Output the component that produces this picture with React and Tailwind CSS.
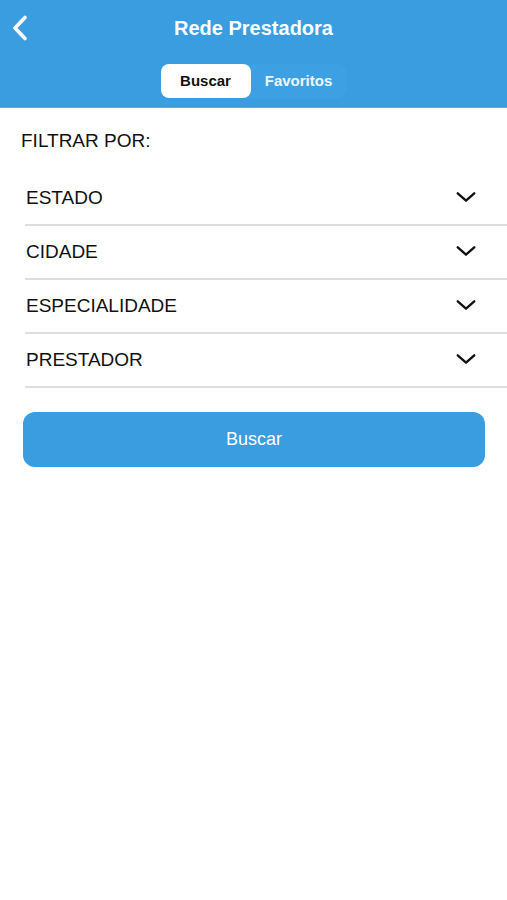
import React from 'react';

const font = { fontFamily: '"Liberation Sans", Arial, sans-serif' };

const Chevron = ({ className }) => (
  <svg viewBox="0 0 24 24" className={className} fill="none" stroke="currentColor" strokeWidth="2.6" strokeLinecap="round" strokeLinejoin="round">
    <path d="M3 8l9 8 9-8" />
  </svg>
);

const BackArrow = () => (
  <svg viewBox="0 0 16 26" className="w-[16px] h-[26px] text-white" fill="none" stroke="currentColor" strokeWidth="3.6" strokeLinecap="round" strokeLinejoin="round">
    <path d="M13 2.5L3 13l10 10.5" />
  </svg>
);

const filters = ['ESTADO', 'CIDADE', 'ESPECIALIDADE', 'PRESTADOR'];

export default function App() {
  return (
    <div className="w-[507px] h-[900px] bg-white" style={font}>
      {/* Header */}
      <div className="bg-[#3a9de0] h-[108px] border-b border-[#5aaee6] flex flex-col">
        <div className="relative h-[56px] flex items-center justify-center">
          <div className="absolute left-[12px] top-[15px]">
            <BackArrow />
          </div>
          <h1 className="text-white text-[20px] font-bold">Rede Prestadora</h1>
        </div>
        <div className="flex justify-center mt-[8px]">
          <div className="flex rounded-[9px] bg-[#3da0e3]">
            <div className="w-[90px] h-[34px] bg-white rounded-[8px] flex items-center justify-center text-[15px] font-bold text-[#111]">
              Buscar
            </div>
            <div className="w-[96px] h-[34px] flex items-center justify-center text-[15px] font-bold text-white/90">
              Favoritos
            </div>
          </div>
        </div>
      </div>

      {/* Filters */}
      <div className="pt-[20px]">
        <p className="pl-[21px] text-[19px] text-[#111] leading-[26px]">FILTRAR POR:</p>
        <div className="mt-[18px] pl-[25px]">
          {filters.map((f) => (
            <div key={f} className="h-[54px] flex items-center justify-between border-b-2 border-[#dedede] pr-[30px]">
              <span className="pl-[1px] text-[19px] text-[#111]">{f}</span>
              <Chevron className="w-[22px] h-[22px] text-[#111] -mt-[3px]" />
            </div>
          ))}
        </div>
        <div className="px-[23px] mt-[24px] pr-[22px]">
          <button className="w-full h-[55px] rounded-[12px] bg-[#3a9de0] text-white text-[18px]">
            Buscar
          </button>
        </div>
      </div>
    </div>
  );
}
